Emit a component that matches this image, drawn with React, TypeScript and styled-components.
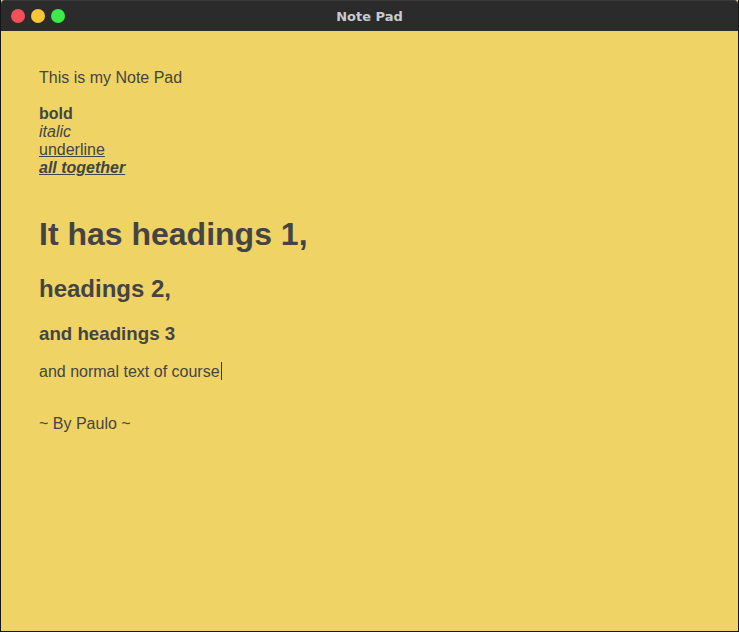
import styled, { createGlobalStyle } from "styled-components";

const GlobalStyle = createGlobalStyle`
    html, body {
        margin: 0;
        padding: 0;
        background: #1c1c1c;
    }
    #root {
        height: 100vh;
    }
`;

const Window = styled.div`
    display: flex;
    flex-direction: column;
    height: 632px;
    box-sizing: border-box;
    border: 1px solid #161616;
    border-top: none;
    background: #efd465;
`;

const TitleBar = styled.div`
    position: relative;
    display: flex;
    align-items: center;
    justify-content: center;
    height: 30px;
    flex-shrink: 0;
    background: #2b2b2b;
    border-top: 1px solid #3a3a3a;
    border-radius: 4px 4px 0 0;
`;

const Lights = styled.div`
    position: absolute;
    left: 10px;
    top: 8px;
    display: flex;
    gap: 6px;
`;

const Light = styled.span<{ $color: string }>`
    width: 14px;
    height: 14px;
    border-radius: 50%;
    background: ${(p) => p.$color};
`;

const Title = styled.span`
    font-family: "DejaVu Sans", sans-serif;
    font-weight: bold;
    font-size: 13px;
    color: #c6cbd2;
`;

const Editor = styled.div`
    flex: 1;
    padding: 22px 38px;
    font-family: "Liberation Sans", Arial, sans-serif;
    font-size: 16px;
    color: #444444;
`;

const Para = styled.p<{ $gap?: number }>`
    margin: ${(p) => p.$gap ?? 16}px 0 16px;
`;

const H1 = styled.h1`
    font-size: 32px;
    margin: 39.4px 0 21.44px;
`;

const H2 = styled.h2`
    font-size: 24px;
    margin: 19.92px 0;
`;

const H3 = styled.h3`
    font-size: 18.72px;
    margin: 18.72px 0 17.7px;
`;

const Underlined = styled.u`
    text-decoration: underline;
`;

const Caret = styled.span`
    display: inline-block;
    width: 1px;
    height: 18px;
    margin-left: 1px;
    vertical-align: -3px;
    background: #333;
`;

export default function App() {
    return (
        <>
            <GlobalStyle />
            <Window>
                <TitleBar>
                    <Lights>
                        <Light $color="#f25056" />
                        <Light $color="#fac536" />
                        <Light $color="#39ea49" />
                    </Lights>
                    <Title>Note Pad</Title>
                </TitleBar>
                <Editor>
                    <Para>This is my Note Pad</Para>
                    <Para $gap={18}>
                        <b>bold</b>
                        <br />
                        <i>italic</i>
                        <br />
                        <Underlined>underline</Underlined>
                        <br />
                        <b>
                            <i>
                                <Underlined>all together</Underlined>
                            </i>
                        </b>
                    </Para>
                    <H1>It has headings 1,</H1>
                    <H2>headings 2,</H2>
                    <H3>and headings 3</H3>
                    <Para>
                        and normal text of course
                        <Caret />
                    </Para>
                    <Para $gap={34}>~ By Paulo ~</Para>
                </Editor>
            </Window>
        </>
    );
}
